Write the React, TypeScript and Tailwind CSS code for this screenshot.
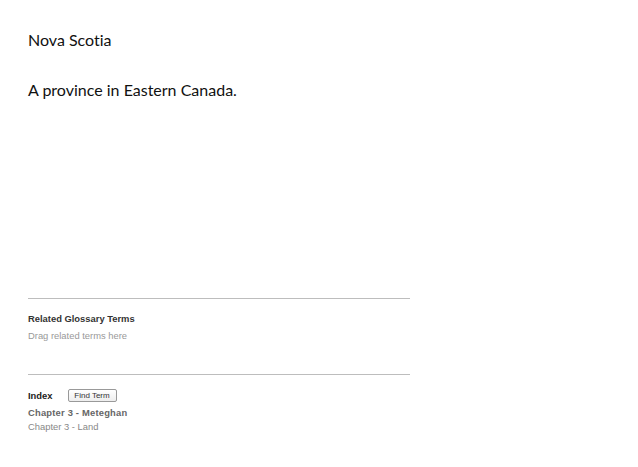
export default function App() {
  return (
    <div className="w-[638px] h-[467px] bg-white flex flex-col pl-[28px] pt-[29px]">
      <div className="w-[382px] flex flex-col">
        <div className="font-['Lato',sans-serif] text-[16px] leading-[22px] text-[#111] [font-variant-ligatures:none]">Nova Scotia</div>
        <div className="font-['Lato',sans-serif] text-[16px] leading-[22px] text-[#111] mt-[28px] [font-variant-ligatures:none]">A province in Eastern Canada.</div>
        <div className="h-[197px]" />
        <div className="border-t border-[#bdbdbd]" />
        <div className="font-['Liberation_Sans',sans-serif] font-bold text-[9.4px] leading-[13px] text-[#333] mt-[13px]">Related Glossary Terms</div>
        <div className="font-['Liberation_Sans',sans-serif] text-[9.4px] leading-[13px] text-[#999] mt-[4px]">Drag related terms here</div>
        <div className="h-[32px]" />
        <div className="border-t border-[#bdbdbd]" />
        <div className="flex items-center mt-[14px] gap-[15px]">
          <div className="font-['Liberation_Sans',sans-serif] font-bold text-[9.4px] leading-[13px] text-[#222]">Index</div>
          <button className="h-[13px] w-[49px] border border-[#999] rounded-[2px] bg-gradient-to-b from-white to-[#eee] font-['Liberation_Sans',sans-serif] text-[8px] leading-[11px] text-[#333] flex items-center justify-center">Find Term</button>
        </div>
        <div className="font-['Liberation_Sans',sans-serif] font-bold text-[9.4px] leading-[13px] text-[#666] mt-[4px] tracking-[0.2px]">Chapter 3 - Meteghan</div>
        <div className="font-['Liberation_Sans',sans-serif] text-[9.4px] leading-[13px] text-[#888] mt-[1px]">Chapter 3 - Land</div>
      </div>
    </div>
  );
}
